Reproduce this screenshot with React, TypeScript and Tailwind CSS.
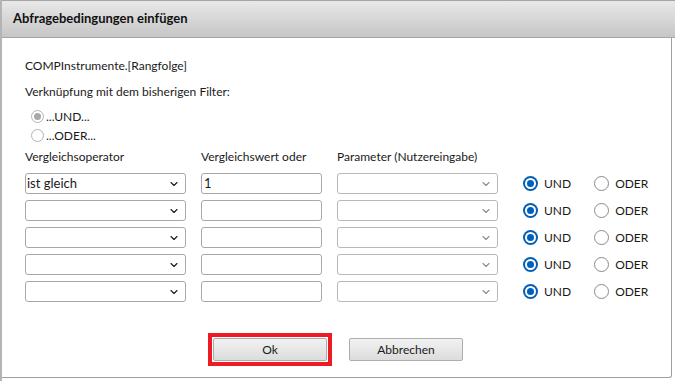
import { ChevronDown } from "lucide-react";

function Radio({ checked, variant }: { checked?: boolean; variant: "blue" | "gray" }) {
  if (variant === "gray") {
    return (
      <span className="flex h-[13px] w-[13px] items-center justify-center rounded-full border border-[#b4b4b4] bg-white">
        {checked && <span className="h-[7px] w-[7px] rounded-full bg-[#a8a8a8]" />}
      </span>
    );
  }
  return checked ? (
    <span className="flex h-[15px] w-[15px] items-center justify-center rounded-full bg-[#005fb8]">
      <span className="h-[11px] w-[11px] rounded-full border-[2px] border-white bg-[#005fb8]" />
    </span>
  ) : (
    <span className="h-[15px] w-[15px] rounded-full border border-[#8a8a8a] bg-white" />
  );
}

function Select({ value, faded }: { value?: string; faded?: boolean }) {
  return (
    <div
      className={`flex h-[21px] items-center justify-between rounded-[3px] border bg-white pl-[1px] pr-[5px] ${
        faded ? "border-[#b8b8b8]" : "border-[#a8a8a8]"
      }`}
    >
      <span className="text-[13px] text-[#1a1a1a]">{value}</span>
      <ChevronDown size={12} strokeWidth={2.2} className={faded ? "text-[#8c8c8c]" : "text-[#1a1a1a]"} />
    </div>
  );
}

const rows = [
  { op: "ist gleich", val: "1" },
  { op: "", val: "" },
  { op: "", val: "" },
  { op: "", val: "" },
  { op: "", val: "" },
];

export default function App() {
  return (
    <div className="flex h-[381px] w-[675px] flex-col border-l-2 border-[#b4b4b4] bg-white font-['Lato',sans-serif] text-[12px] text-[#1a1a1a]">
      {/* titel */}
      <div className="flex h-[38px] shrink-0 items-center border-b border-t border-[#a5a5a5] bg-gradient-to-b from-[#e8e8e8] to-[#c6c6c6] pl-[11px]">
        <span className="text-[13px] font-bold text-[#111]">Abfragebedingungen einfügen</span>
      </div>

      {/* inhalt */}
      <div className="mb-[3px] mr-[3px] flex flex-1 flex-col rounded-br-[3px] border-b border-r border-[#a0a0a0] pl-[23px] pt-[20px]">
        <div className="leading-[16px]">COMPInstrumente.[Rangfolge]</div>
        <div className="mt-[10px] leading-[16px]">Verknüpfung mit dem bisherigen Filter:</div>

        <div className="ml-[6px] mt-[10px] flex flex-col gap-[6px]">
          <label className="flex items-center gap-[2px] leading-[13px]">
            <Radio variant="gray" checked />
            <span>...UND...</span>
          </label>
          <label className="flex items-center gap-[2px] leading-[13px]">
            <Radio variant="gray" />
            <span>...ODER...</span>
          </label>
        </div>

        <div className="mt-[7px] grid grid-cols-[176px_136px_auto] leading-[16px]">
          <span>Vergleichsoperator</span>
          <span>Vergleichswert oder</span>
          <span>Parameter (Nutzereingabe)</span>
        </div>

        <div className="mt-[8px] flex flex-col gap-[6px]">
          {rows.map((r, i) => (
            <div key={i} className="flex items-center">
              <div className="w-[161px]">
                <Select value={r.op} />
              </div>
              <div className="ml-[15px] flex h-[21px] w-[121px] items-center rounded-[3px] border border-[#a8a8a8] bg-white pl-[2px] text-[13px]">
                {r.val}
              </div>
              <div className="ml-[15px] w-[161px]">
                <Select faded />
              </div>
              <label className="ml-[25px] flex items-center gap-[6px]">
                <Radio variant="blue" checked />
                <span>UND</span>
              </label>
              <label className="ml-[23px] flex items-center gap-[6px]">
                <Radio variant="blue" />
                <span>ODER</span>
              </label>
            </div>
          ))}
        </div>

        <div className="mt-[31px] flex items-center pl-[183px]">
          <div className="border-[4px] border-[#ed1c24] p-[1px]">
            <button className="h-[23px] w-[114px] rounded-[2px] border border-[#adadad] bg-gradient-to-b from-[#f2f2f2] to-[#dcdcdc] text-[12px]">
              Ok
            </button>
          </div>
          <button className="ml-[17px] h-[23px] w-[114px] rounded-[2px] border border-[#adadad] bg-gradient-to-b from-[#f2f2f2] to-[#dcdcdc] text-[12px]">
            Abbrechen
          </button>
        </div>
      </div>
    </div>
  );
}
